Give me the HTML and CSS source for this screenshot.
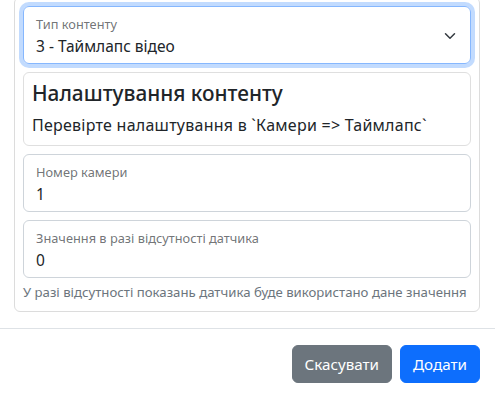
FILE: index.html
```html
<!DOCTYPE html>
<html lang="uk">
<head>
  <meta charset="UTF-8">
  <meta name="viewport" content="width=device-width, initial-scale=1.0">
  <title>Додати контент</title>
  <link rel="stylesheet" href="styles.css">
</head>
<body>
  <div class="modal-body">
    <div class="outer-card">
      <div class="field field-focus">
        <div class="field-main">
          <label class="field-label">Тип контенту</label>
          <div class="field-value">3 - Таймлапс відео</div>
        </div>
        <svg class="chevron" width="12" height="12" viewBox="0 0 16 16">
          <path fill="none" stroke="#343a40" stroke-linecap="round" stroke-linejoin="round" stroke-width="2" d="m2 5 6 6 6-6"/>
        </svg>
      </div>

      <div class="info-card">
        <h5>Налаштування контенту</h5>
        <p>Перевірте налаштування в `Камери =&gt; Таймлапс`</p>
      </div>

      <div class="field">
        <div class="field-main">
          <label class="field-label" for="camera">Номер камери</label>
          <input class="field-value" type="text" id="camera" value="1">
        </div>
      </div>

      <div class="field field-tight">
        <div class="field-main">
          <label class="field-label" for="fallback">Значення в разі відсутності датчика</label>
          <input class="field-value" type="text" id="fallback" value="0">
        </div>
      </div>
      <div class="help">У разі відсутності показань датчика буде використано дане значення</div>
    </div>
  </div>

  <div class="modal-footer">
    <button type="button" class="btn btn-secondary">Скасувати</button>
    <button type="button" class="btn btn-primary">Додати</button>
  </div>
</body>
</html>
```
FILE: styles.css
```css
body {
  margin: 0;
  font-family: "Noto Sans", "Open Sans", sans-serif;
  font-size: 16px;
  line-height: 1.5;
  color: #212529;
  background: #fff;
}
.modal-body {
  padding: 0 15px 16px 14px;
}
.outer-card {
  margin-top: -3px;
  padding: 8px;
  border: 1px solid #dcdcdc;
  border-radius: 6px;
}
.field {
  display: flex;
  align-items: center;
  height: 58px;
  box-sizing: border-box;
  padding: 7px 12px 5px;
  margin-bottom: 8px;
  border: 1px solid #ced4da;
  border-radius: 6px;
}
.field-tight {
  margin-bottom: 4px;
}
.field-focus {
  border-color: #86b7fe;
  box-shadow: 0 0 0 4px rgba(13, 110, 253, 0.25);
}
.field-main {
  flex: 1;
  display: flex;
  flex-direction: column;
}
.field-label {
  font-size: 12.8px;
  line-height: 20px;
  color: rgba(33, 37, 41, 0.65);
}
.field-value {
  font: inherit;
  font-size: 15.5px;
  line-height: 24px;
  height: 24px;
  color: #212529;
  border: none;
  padding: 0;
  margin: 0;
  outline: none;
  background: transparent;
  width: 100%;
}
.chevron {
  margin: 0 2px 0 8px;
}
.info-card {
  padding: 8px;
  margin-bottom: 8px;
  border: 1px solid #dfdfdf;
  border-radius: 6px;
}
.info-card h5 {
  margin: 0 0 8px;
  font-size: 20.8px;
  font-weight: 500;
  line-height: 24px;
}
.info-card p {
  margin: 0;
  letter-spacing: 0.25px;
}
.help {
  font-size: 13.2px;
  line-height: 21px;
  color: #6c757d;
  white-space: nowrap;
}
.modal-footer {
  display: flex;
  justify-content: flex-end;
  padding: 12px 11px 12px 12px;
  border-top: 1px solid #dee2e6;
}
.btn {
  margin: 4px;
  padding: 6px 12px;
  font: inherit;
  font-size: 15.2px;
  line-height: 24px;
  color: #fff;
  border: 1px solid transparent;
  border-radius: 6px;
}
.btn-secondary {
  background-color: #6c757d;
  border-color: #6c757d;
}
.btn-primary {
  background-color: #0d6efd;
  border-color: #0d6efd;
}
```
